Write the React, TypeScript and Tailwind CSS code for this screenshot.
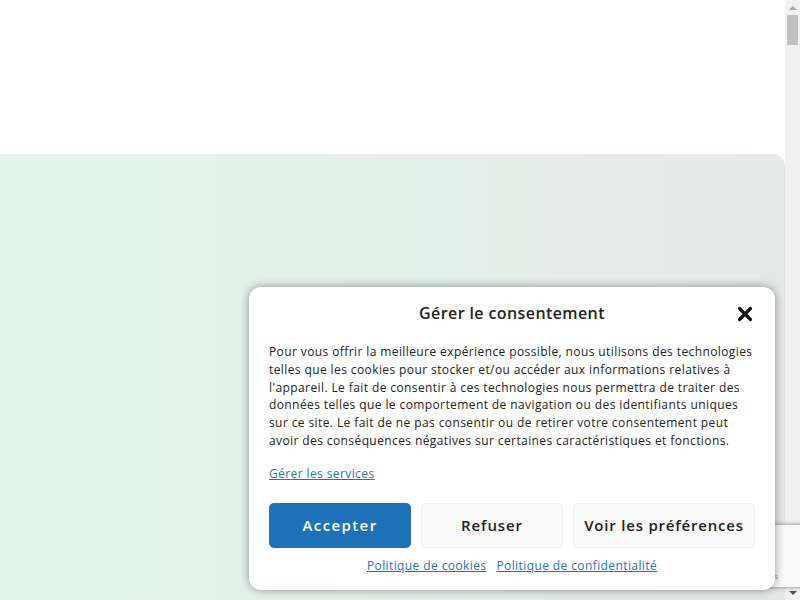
import React from "react";

export default function App() {
  const font = { fontFamily: '"Open Sans", "Liberation Sans", sans-serif' };
  return (
    <div className="relative w-[800px] h-[600px] overflow-hidden bg-white flex" style={font}>
      <div className="flex-1 flex flex-col">
        <div className="h-[154px] bg-white" />
        <div className="flex-1 rounded-tr-[12px] bg-gradient-to-r from-[#e1f7ec] to-[#e4e8e7]" />
      </div>
      {/* scrollbar */}
      <div className="w-[15px] h-full bg-[#f1f1f1] flex flex-col items-center">
        <div className="h-[15px] flex items-center justify-center">
          <div className="w-0 h-0 border-l-[4px] border-r-[4px] border-b-[4px] border-l-transparent border-r-transparent border-b-[#a3a3a3]" />
        </div>
        <div className="w-[11px] h-[30px] bg-[#c1c1c1]" />
        <div className="flex-1" />
        <div className="h-[15px] flex items-center justify-center">
          <div className="w-0 h-0 border-l-[4px] border-r-[4px] border-t-[4px] border-l-transparent border-r-transparent border-t-[#505050]" />
        </div>
      </div>

      {/* recaptcha badge peeking */}
      <div className="absolute left-[756px] top-[525px] w-[256px] h-[62px] bg-[#f9f9f9] shadow-[0_0_5px_gray] flex items-end">
        <span className="text-[8px] text-[#9a9a9a] ml-[-1px] mb-[5px]">Terms</span>
      </div>

      {/* modal */}
      <div className="absolute left-[249px] top-[287px] w-[526px] h-[303px] bg-white rounded-[12px] shadow-[0_0_10px_rgba(0,0,0,0.4)] px-[20px] flex flex-col">
        <div className="relative h-[52px] flex items-center justify-center">
          <span className="text-[16px] font-semibold text-[#222] tracking-[0.4px]">Gérer le consentement</span>
          <svg className="absolute right-[2px] top-[19px]" width="16" height="16" viewBox="0 0 16 16">
            <path d="M2.5 2.5 L13.5 13.5 M13.5 2.5 L2.5 13.5" stroke="#111" strokeWidth="3.2" strokeLinecap="round" />
          </svg>
        </div>
        <p className="mt-[4px] text-[12px] leading-[17.8px] text-[#222] tracking-[0.4px]">
          Pour vous offrir la meilleure expérience possible, nous utilisons des technologies<br />
          telles que les cookies pour stocker et/ou accéder aux informations relatives à<br />
          l'appareil. Le fait de consentir à ces technologies nous permettra de traiter des<br />
          données telles que le comportement de navigation ou des identifiants uniques<br />
          sur ce site. Le fait de ne pas consentir ou de retirer votre consentement peut<br />
          avoir des conséquences négatives sur certaines caractéristiques et fonctions.
        </p>
        <a className="mt-[15px] text-[12px] leading-[18px] text-[#1e73be] underline w-fit tracking-[0.4px]">Gérer les services</a>
        <div className="mt-[20px] flex gap-[10px]">
          <button className="w-[142px] h-[45px] rounded-[5px] bg-[#1e71b9] text-white text-[15px] font-semibold tracking-[1.4px]">Accepter</button>
          <button className="w-[142px] h-[45px] rounded-[5px] bg-[#f9f9f9] border border-[#f0f0f0] text-[#222] text-[15px] font-semibold tracking-[0.9px]">Refuser</button>
          <button className="w-[182px] h-[45px] rounded-[5px] bg-[#f9f9f9] border border-[#f0f0f0] text-[#222] text-[15px] font-semibold tracking-[0.8px]">Voir les préférences</button>
        </div>
        <div className="mt-[10px] flex justify-center gap-[10px] text-[12px] leading-[16px] text-[#1e73be] tracking-[0.4px]">
          <a className="underline">Politique de cookies</a>
          <a className="underline">Politique de confidentialité</a>
        </div>
      </div>
    </div>
  );
}
